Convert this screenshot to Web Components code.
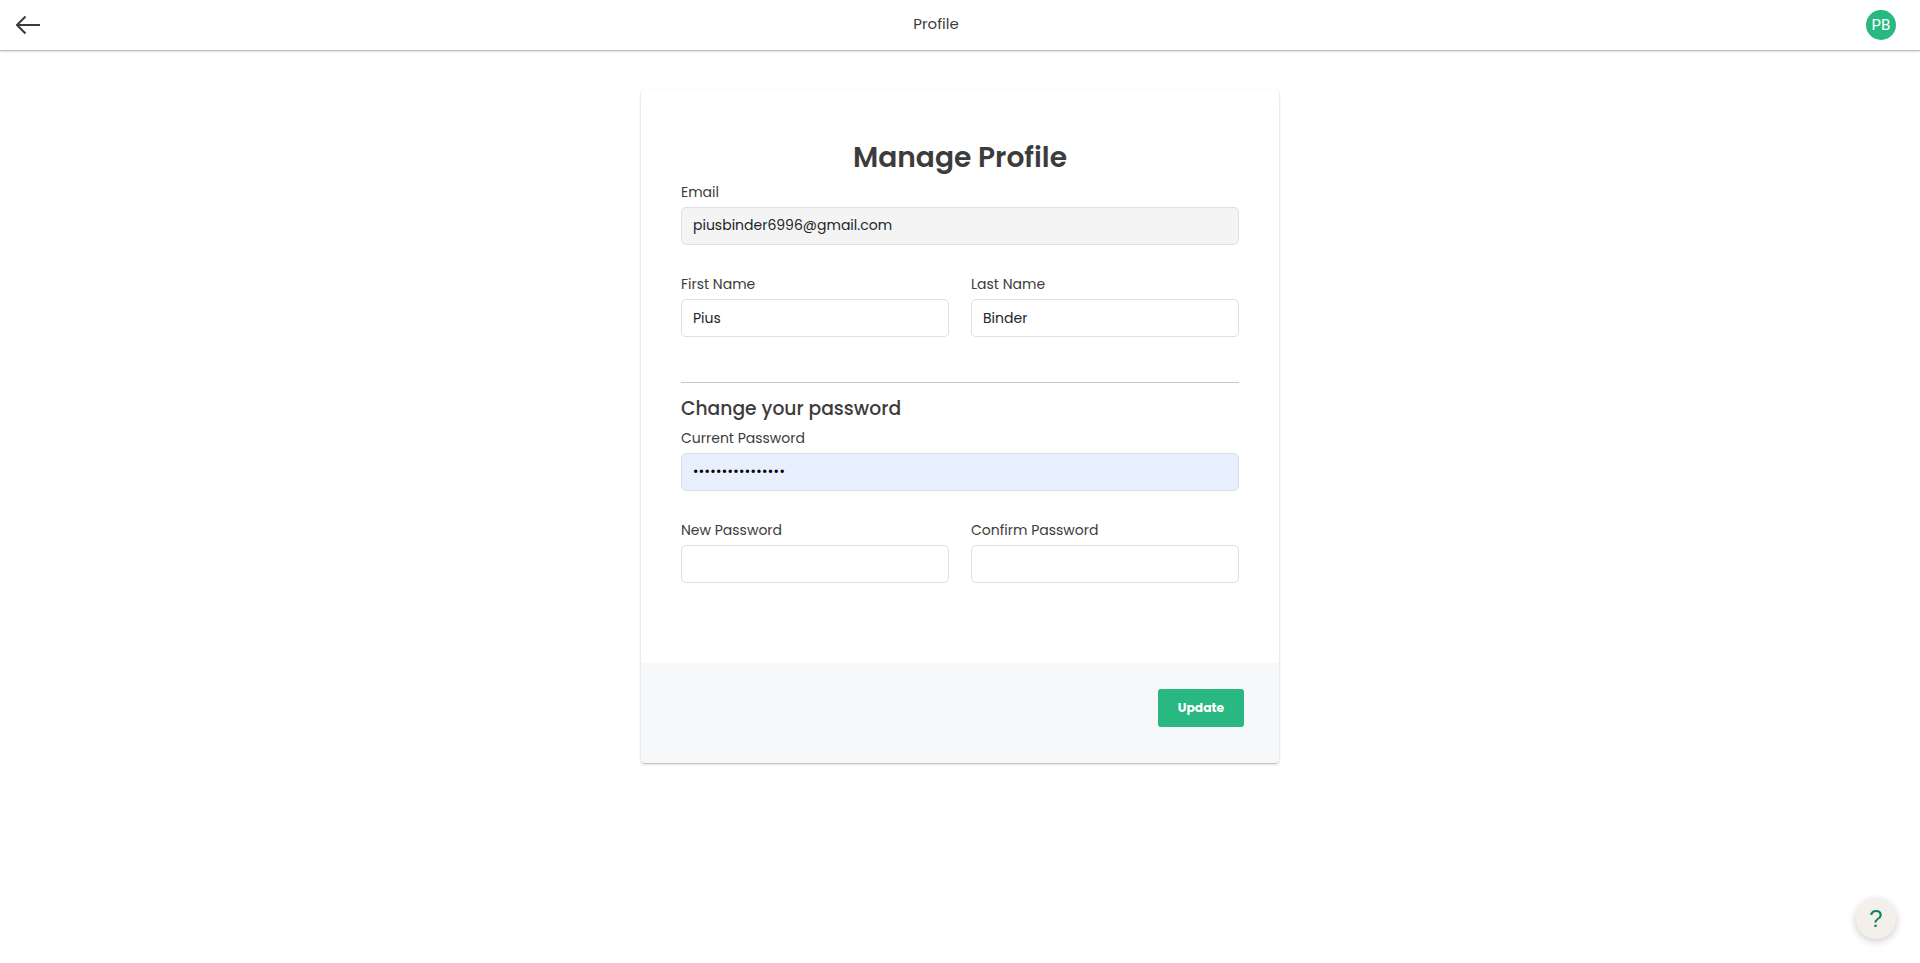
<!DOCTYPE html>
<html lang="en">
<head>
  <meta charset="utf-8">
  <title>Profile</title>
  <style>
    body {
      margin: 0;
      min-height: 100vh;
      background: #fff;
      color: #3c3c3c;
      font-family: Poppins, Inter, sans-serif;
      font-size: 14px;
      --green: #29b782;
      --shadow: 0 1px 3px rgba(0,0,0,.2), 0 1px 1px rgba(0,0,0,.14);
    }
  </style>
</head>
<body>
  <page-header>
    Profile
    <user-avatar slot="user">PB</user-avatar>
  </page-header>

  <profile-card>
    <span slot="title">Manage Profile</span>
    <text-field label="Email" class="readonly">piusbinder6996@gmail.com</text-field>
    <field-row>
      <text-field label="First Name">Pius</text-field>
      <text-field label="Last Name">Binder</text-field>
    </field-row>
    <form-section heading="Change your password">
      <text-field label="Current Password" class="autofill">••••••••••••••••</text-field>
      <field-row>
        <text-field label="New Password"></text-field>
        <text-field label="Confirm Password"></text-field>
      </field-row>
    </form-section>
    <action-button slot="actions">Update</action-button>
  </profile-card>

  <help-button>?</help-button>

  <script>
    // Attaches an open shadow root with the given markup
    function render(element, html) {
      element.attachShadow({ mode: 'open' }).innerHTML = html;
    }

    class PageHeader extends HTMLElement {
      constructor() {
        super();
        render(this, `
          <style>
            :host {
              display: flex;
              align-items: center;
              height: 50px;
              padding: 0 24px 0 16px;
              box-sizing: border-box;
              background: #fff;
              box-shadow: var(--shadow);
            }
            .side {
              flex: 1 1 0;
              display: flex;
              align-items: center;
            }
            .right { justify-content: flex-end; }
            .title {
              margin-right: 40px;
              font-size: 15px;
              line-height: 24px;
              padding-bottom: 2px;
            }
            svg { display: block; }
          </style>
          <div class="side">
            <svg width="24" height="20" viewBox="0 0 24 20" fill="none" stroke="#3c3c3c" stroke-width="2">
              <path d="M24 10H1.5M9.5 1.5L1 10l8.5 8.5"/>
            </svg>
          </div>
          <div class="title"><slot></slot></div>
          <div class="side right"><slot name="user"></slot></div>
        `);
      }
    }

    class UserAvatar extends HTMLElement {
      constructor() {
        super();
        render(this, `
          <style>
            :host {
              display: flex;
              align-items: center;
              justify-content: center;
              width: 30px;
              height: 30px;
              border-radius: 50%;
              background: var(--green);
              color: #fff;
              font: 400 15px/30px Roboto, sans-serif;
            }
          </style>
          <slot></slot>
        `);
      }
    }

    class ProfileCard extends HTMLElement {
      constructor() {
        super();
        render(this, `
          <style>
            :host {
              display: block;
              width: 638px;
              margin: 40px auto 0;
              border-radius: 4px;
              overflow: hidden;
              background: #fff;
              box-shadow: var(--shadow);
            }
            .body {
              display: flex;
              flex-direction: column;
              height: 573px;
              padding: 46px 40px 0;
              box-sizing: border-box;
            }
            h1 {
              margin: 0 0 3px;
              font-size: 28.1px;
              font-weight: 600;
              line-height: 42px;
              text-align: center;
            }
            .fields {
              display: flex;
              flex-direction: column;
              gap: 28px;
            }
            footer {
              display: flex;
              justify-content: flex-end;
              height: 100px;
              padding: 26px 35px 0;
              box-sizing: border-box;
              background: #f6f8fa;
            }
          </style>
          <div class="body">
            <h1><slot name="title"></slot></h1>
            <div class="fields"><slot></slot></div>
          </div>
          <footer><slot name="actions"></slot></footer>
        `);
      }
    }

    class FieldRow extends HTMLElement {
      constructor() {
        super();
        render(this, `
          <style>
            :host {
              display: grid;
              grid-template-columns: 1fr 1fr;
              gap: 22px;
            }
          </style>
          <slot></slot>
        `);
      }
    }

    class FormSection extends HTMLElement {
      constructor() {
        super();
        render(this, `
          <style>
            :host {
              display: block;
              margin-top: 17px;
              padding-top: 12px;
              border-top: 1px solid #c8c8c8;
            }
            h3 {
              margin: 0 0 4px;
              font-size: 18.72px;
              font-weight: 500;
              line-height: 28px;
            }
            .fields {
              display: flex;
              flex-direction: column;
              gap: 28px;
            }
          </style>
          <h3>${this.getAttribute('heading')}</h3>
          <div class="fields"><slot></slot></div>
        `);
      }
    }

    class TextField extends HTMLElement {
      constructor() {
        super();
        render(this, `
          <style>
            :host { display: block; }
            label {
              display: block;
              margin-bottom: 4px;
              line-height: 22px;
            }
            .input {
              display: flex;
              align-items: center;
              height: 38px;
              padding: 0 11px;
              box-sizing: border-box;
              border: 1px solid #dddfe4;
              border-radius: 5px;
              background: #fff;
              color: #212529;
              line-height: 22px;
            }
            :host(.readonly) .input {
              padding-bottom: 2px;
              background: #f4f4f4;
            }
            :host(.autofill) .input {
              background: #e8effd;
              color: #000;
              font-family: Roboto, sans-serif;
              font-size: 16px;
              letter-spacing: .36px;
            }
          </style>
          <label>${this.getAttribute('label')}</label>
          <div class="input"><slot></slot></div>
        `);
      }
    }

    class ActionButton extends HTMLElement {
      constructor() {
        super();
        render(this, `
          <style>
            :host { display: block; }
            button {
              width: 86px;
              height: 38px;
              padding: 0;
              border: 0;
              border-radius: 3px;
              background: var(--green);
              color: #fff;
              font: 700 12.3px/20px Poppins, Inter, sans-serif;
              cursor: pointer;
            }
          </style>
          <button><slot></slot></button>
        `);
      }
    }

    class HelpButton extends HTMLElement {
      constructor() {
        super();
        render(this, `
          <style>
            :host {
              position: fixed;
              right: 24px;
              bottom: 24px;
              display: flex;
              align-items: center;
              justify-content: center;
              width: 40px;
              height: 40px;
              border-radius: 50%;
              background: #f3f0e9;
              color: #0b8062;
              font: 400 24px/40px "Liberation Sans", Arial, sans-serif;
              box-shadow: 0 2px 8px rgba(0,0,0,.22);
              cursor: pointer;
            }
          </style>
          <slot></slot>
        `);
      }
    }

    customElements.define('page-header', PageHeader);
    customElements.define('user-avatar', UserAvatar);
    customElements.define('profile-card', ProfileCard);
    customElements.define('field-row', FieldRow);
    customElements.define('form-section', FormSection);
    customElements.define('text-field', TextField);
    customElements.define('action-button', ActionButton);
    customElements.define('help-button', HelpButton);
  </script>
</body>
</html>
